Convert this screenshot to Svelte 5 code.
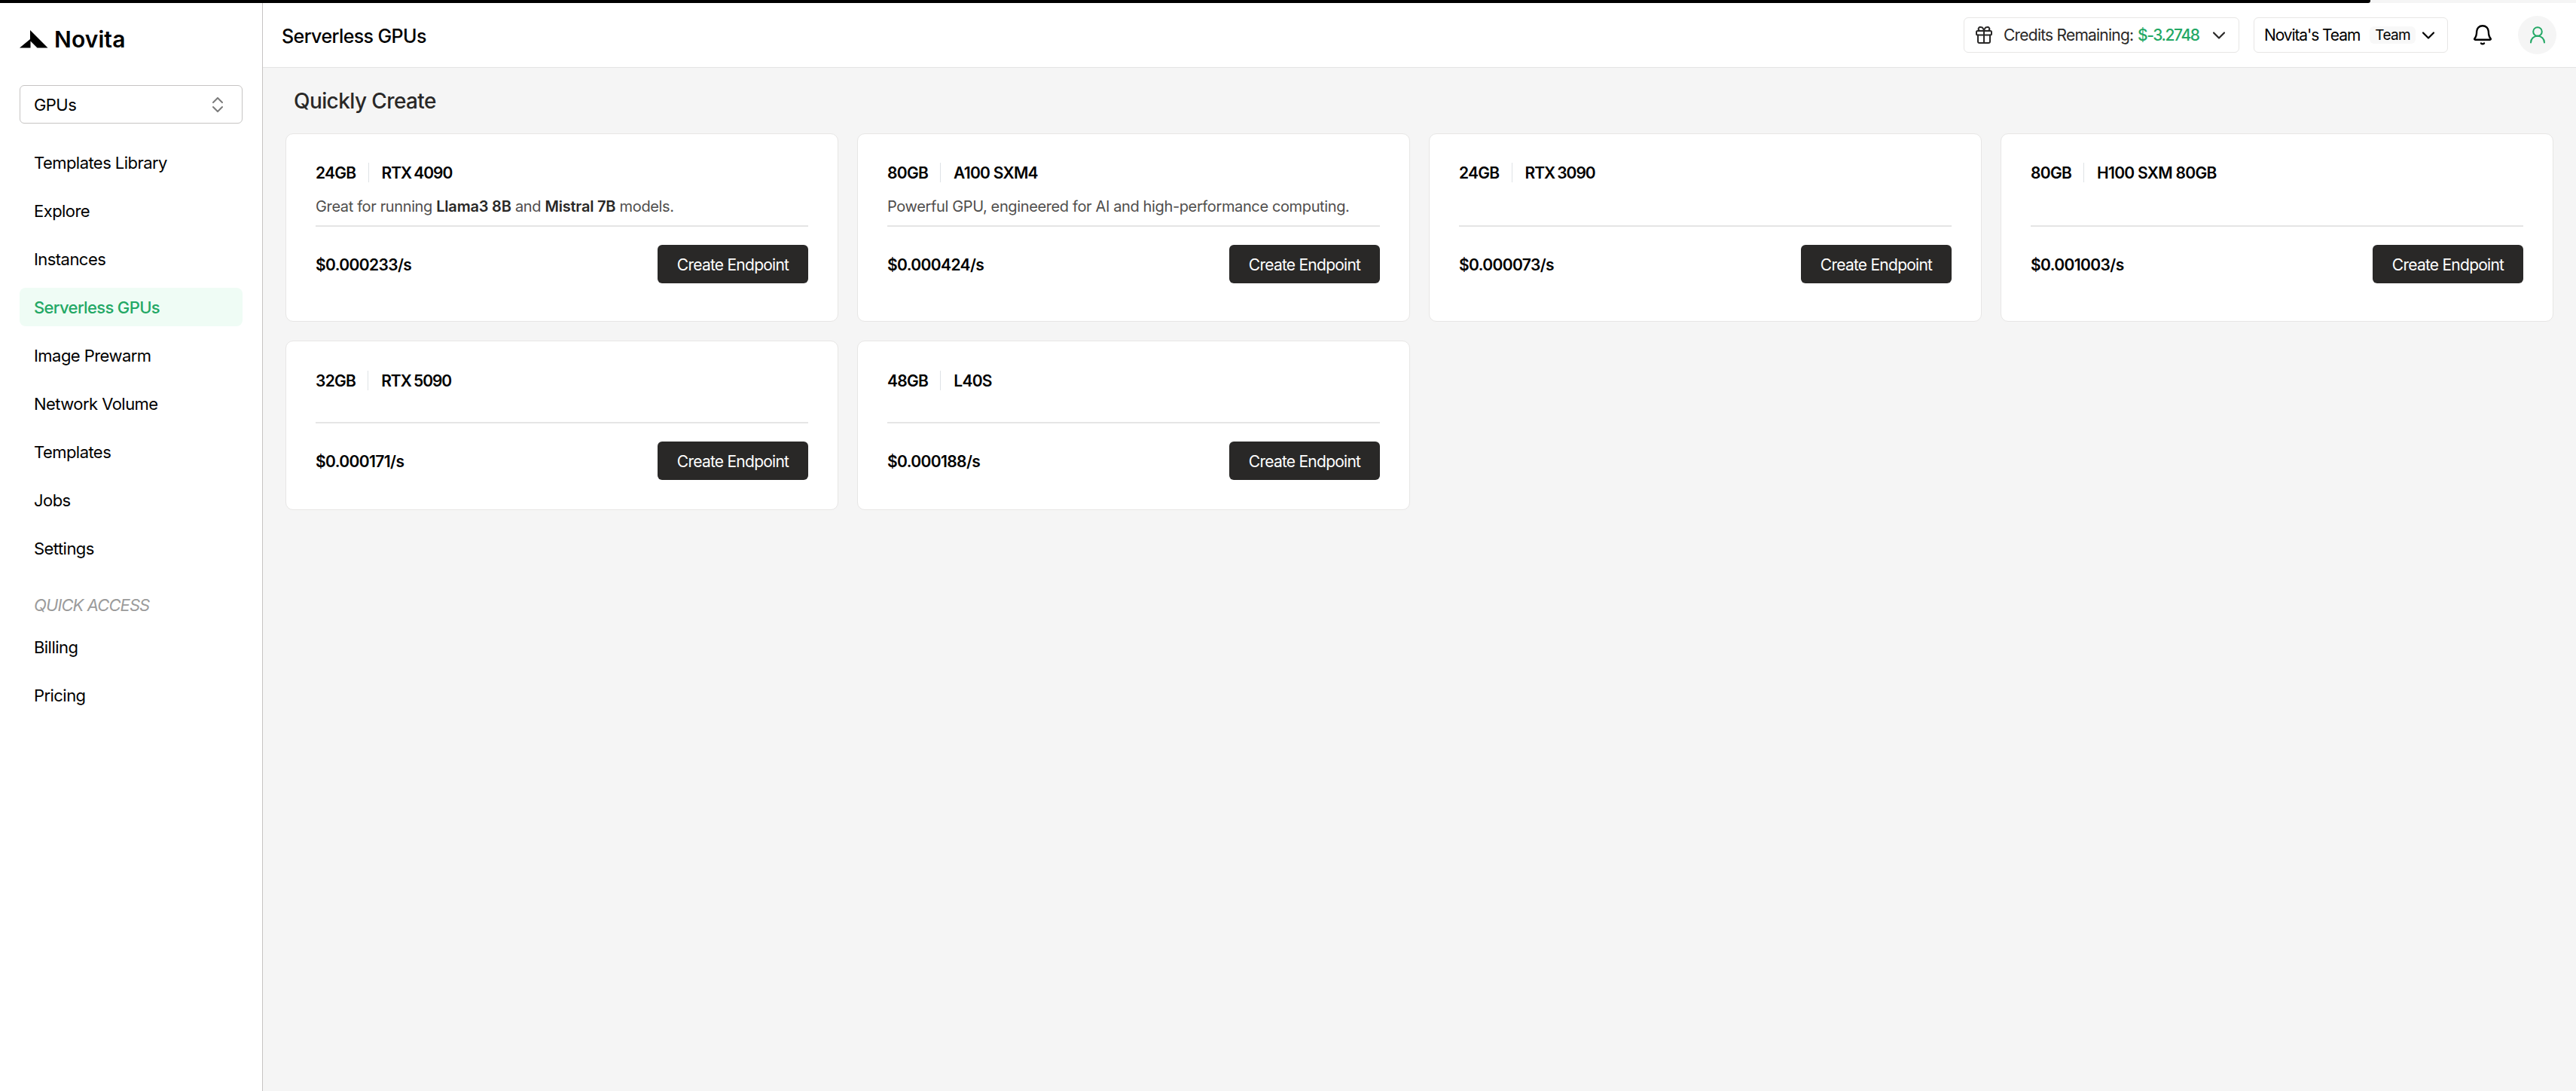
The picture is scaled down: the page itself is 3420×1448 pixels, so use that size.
<script lang="ts">
    type Gpu = {
        memory: string;
        name: string;
        price: string;
        desc?: { text: string; strong?: boolean }[];
    };

    const navItems = [
        "Templates Library",
        "Explore",
        "Instances",
        "Serverless GPUs",
        "Image Prewarm",
        "Network Volume",
        "Templates",
        "Jobs",
        "Settings",
    ];
    const quickItems = ["Billing", "Pricing"];
    let active = $state("Serverless GPUs");

    const rows: Gpu[][] = [
        [
            {
                memory: "24GB",
                name: "RTX 4090",
                price: "$0.000233/s",
                desc: [
                    { text: "Great for running " },
                    { text: "Llama3 8B", strong: true },
                    { text: " and " },
                    { text: "Mistral 7B", strong: true },
                    { text: " models." },
                ],
            },
            {
                memory: "80GB",
                name: "A100 SXM4",
                price: "$0.000424/s",
                desc: [{ text: "Powerful GPU, engineered for AI and high-performance computing." }],
            },
            { memory: "24GB", name: "RTX 3090", price: "$0.000073/s" },
            { memory: "80GB", name: "H100 SXM 80GB", price: "$0.001003/s" },
        ],
        [
            { memory: "32GB", name: "RTX 5090", price: "$0.000171/s" },
            { memory: "48GB", name: "L40S", price: "$0.000188/s" },
        ],
    ];
</script>

<div class="progress"><div class="progress-bar"></div></div>

<div class="layout">
    <aside class="sidebar">
        <div class="logo">
            <svg width="38" height="24" viewBox="0 0 38 24">
                <path d="M14 0v12L0 23.500h14.500v-9l9 9H37.500z" />
            </svg>
            <span>Novita</span>
        </div>

        <button class="select">
            <span>GPUs</span>
            <svg width="14" height="20" viewBox="0 0 14 20">
                <path d="M1 7l6-6 6 6M1 13l6 6 6-6" />
            </svg>
        </button>

        <nav>
            {#each navItems as item}
                <button class="nav-item" class:active={item === active} onclick={() => (active = item)}>
                    {item}
                </button>
            {/each}
            <p class="nav-title">QUICK ACCESS</p>
            {#each quickItems as item}
                <button class="nav-item" class:active={item === active} onclick={() => (active = item)}>
                    {item}
                </button>
            {/each}
        </nav>
    </aside>

    <main>
        <header>
            <h1>Serverless GPUs</h1>
            <div class="tools">
                <button class="credits">
                    <svg class="gift" width="22" height="23" viewBox="0 0 22 23">
                        <rect x="1" y="6" width="20" height="5.500" rx="1.500" />
                        <path d="M3 11.500v8.500a2 2 0 0 0 2 2h12a2 2 0 0 0 2-2v-8.500M11 6v16" />
                        <path d="M11 6C10.300 2.800 8.800 1 6.800 1a2.500 2.500 0 0 0-2 4.500M11 6c.7-3.200 2.200-5 4.200-5a2.500 2.500 0 0 1 2 4.500" />
                    </svg>
                    <span class="label">Credits Remaining:</span>
                    <span class="amount">$-3.2748</span>
                    <svg class="chevron" width="16" height="10" viewBox="0 0 16 10"><path d="M1 1.500l7 7 7-7" /></svg>
                </button>
                <button class="team">
                    <span class="team-name">Novita's Team</span>
                    <span class="tag">Team</span>
                    <svg class="chevron" width="16" height="10" viewBox="0 0 16 10"><path d="M1 1.500l7 7 7-7" /></svg>
                </button>
                <svg class="bell" width="24" height="27" viewBox="0 0 24 27">
                    <path d="M12 1.200c-4.500 0-7.600 3.200-7.800 7.300-.1 3.500-.4 6.300-2 8.500l-.8 1.200c-.5.800-.1 1.600.8 1.600h19.600c.9 0 1.300-.8.8-1.600l-.8-1.200c-1.600-2.200-1.900-5-2-8.500-.2-4.100-3.300-7.300-7.800-7.300z" />
                    <path d="M10 24.500c1 1.200 3 1.200 4 0" />
                </svg>
                <div class="avatar">
                    <svg width="20" height="23" viewBox="0 0 20 23">
                        <circle cx="10" cy="7" r="5.800" />
                        <path d="M1 21.500c0-5.200 4-8.700 9-8.700s9 3.500 9 8.700" />
                    </svg>
                </div>
            </div>
        </header>

        <section>
            <h2>Quickly Create</h2>
            {#each rows as row, i}
                <div class="cards" class:compact={i > 0}>
                    {#each row as gpu}
                        <article class="card">
                            <div class="card-head">
                                <span>{gpu.memory}</span>
                                <i></i>
                                <span class:rtx={gpu.name.startsWith("RTX")}>{gpu.name}</span>
                            </div>
                            <p class="desc">
                                {#each gpu.desc ?? [] as part}{#if part.strong}<b>{part.text}</b>{:else}{part.text}{/if}{/each}
                            </p>
                            <div class="card-foot">
                                <span class="price">{gpu.price}</span>
                                <button class="create">Create Endpoint</button>
                            </div>
                        </article>
                    {/each}
                </div>
            {/each}
        </section>
    </main>
</div>

<style>
    :global(body) {
        background: #fff;
        font-family: Inter, "Liberation Sans", sans-serif;
        font-size: 22px;
        color: #000;
    }
    button {
        font: inherit;
        color: inherit;
        letter-spacing: inherit;
        white-space: nowrap;
        background: none;
        border: 0;
        padding: 0;
        cursor: pointer;
    }
    svg {
        display: block;
        flex: none;
        fill: none;
        stroke: currentColor;
        stroke-width: 2;
        stroke-linecap: round;
        stroke-linejoin: round;
    }
    h1,
    h2,
    p {
        margin: 0;
    }
    .progress {
        height: 4px;
        background: #f5f5f5;
    }
    .progress-bar {
        width: 92.03%;
        height: 4px;
        background: #000;
        border-bottom-right-radius: 3px;
    }
    .layout {
        display: flex;
        height: 1444px;
    }
    .sidebar {
        box-sizing: border-box;
        width: 349px;
        padding: 35px 26px 0;
        border-right: 1px solid #c6c4c3;
        letter-spacing: -0.55px;
    }
    .logo {
        display: flex;
        align-items: center;
        gap: 8px;
        height: 26px;
    }
    .logo svg {
        fill: #000;
        stroke: none;
    }
    .logo span {
        font-size: 30px;
        font-weight: 600;
        letter-spacing: 0.1px;
    }
    .select {
        box-sizing: border-box;
        display: flex;
        align-items: center;
        justify-content: space-between;
        width: 296px;
        height: 51px;
        margin: 48px 0 26px;
        padding: 0 25px 0 18px;
        border: 1px solid #c6c4c3;
        border-radius: 6px;
    }
    .select svg {
        color: #7b7b7b;
    }
    .nav-item {
        display: block;
        width: 296px;
        height: 51px;
        margin-bottom: 13px;
        padding-left: 19px;
        border-radius: 8px;
        text-align: left;
    }
    .nav-item.active {
        background: #effcf5;
        color: #23a865;
        font-weight: 500;
        letter-spacing: -0.65px;
    }
    .nav-title {
        height: 40px;
        margin: 30px 0 10px;
        padding-left: 19px;
        line-height: 40px;
        font-style: italic;
        letter-spacing: -0.9px;
        color: #9b9b9b;
    }
    main {
        flex: 1;
        background: #f5f5f5;
    }
    header {
        box-sizing: border-box;
        display: flex;
        align-items: center;
        justify-content: space-between;
        height: 86px;
        padding: 0 26px 0 25px;
        background: #fff;
        border-bottom: 1px solid #e4e4e4;
    }
    h1 {
        padding-top: 2px;
        font-size: 25px;
        font-weight: 500;
        letter-spacing: -0.6px;
    }
    .tools {
        display: flex;
        align-items: center;
        font-size: 21px;
    }
    .credits,
    .team {
        box-sizing: border-box;
        display: flex;
        align-items: center;
        height: 47px;
        border: 1px solid #e7e6e5;
        border-radius: 6px;
    }
    .credits {
        width: 366px;
        margin-right: 19px;
        padding: 0 18px 0 15px;
        color: #292827;
    }
    .gift {
        margin-right: 15px;
    }
    .label {
        width: 172px;
        margin-right: 6px;
        letter-spacing: -0.78px;
    }
    .amount {
        color: #23a865;
        font-weight: 500;
        letter-spacing: -1.4px;
    }
    .chevron {
        margin-left: auto;
        stroke-width: 2.2;
    }
    .team {
        width: 258px;
        margin-right: 34px;
        padding: 0 17px 0 13px;
        letter-spacing: -0.6px;
    }
    .team-name {
        letter-spacing: -1.1px;
    }
    .tag {
        margin-left: 13px;
        padding: 0 7px;
        border-radius: 6px;
        background: #f8f8f8;
        font-size: 19px;
        line-height: 23px;
    }
    .bell {
        margin-right: 35px;
        stroke-width: 2.4;
    }
    .avatar {
        display: grid;
        place-items: center;
        width: 51px;
        height: 51px;
        border-radius: 50%;
        background: #f5f5f5;
        color: #23a865;
    }
    section {
        padding: 20px 30px 0;
    }
    h2 {
        height: 67px;
        padding-left: 11px;
        line-height: 49px;
        font-size: 28px;
        font-weight: 500;
        letter-spacing: -0.6px;
        color: #292827;
    }
    .cards {
        display: grid;
        grid-template-columns: repeat(4, 734px);
        gap: 25px;
        margin-bottom: 25px;
    }
    .card {
        box-sizing: border-box;
        height: 250px;
        padding: 38px 39px 0;
        background: #fff;
        border: 1px solid #e7e6e5;
        border-radius: 10px;
    }
    .card-head {
        display: flex;
        align-items: center;
        height: 26px;
        font-size: 21px;
        font-weight: 600;
        letter-spacing: -0.7px;
    }
    .card-head i {
        width: 1px;
        height: 26px;
        margin: 0 17px 0 16px;
        background: #dfe3e6;
    }
    .card-head .rtx {
        letter-spacing: -1.05px;
        word-spacing: -1px;
    }
    .desc {
        box-sizing: border-box;
        height: 59px;
        padding-top: 16px;
        border-bottom: 2px solid #e5e5e5;
        line-height: 32px;
        font-size: 20px;
        letter-spacing: -0.37px;
        color: #4f4e4d;
    }
    .desc b {
        font-weight: 600;
        letter-spacing: -0.2px;
        color: #292827;
    }
    .compact .card {
        height: 225px;
        padding-top: 39px;
    }
    .compact .desc {
        height: 44px;
    }
    .card-foot {
        display: flex;
        align-items: center;
        justify-content: space-between;
        margin-top: 24px;
    }
    .price {
        padding-top: 1px;
        font-size: 21px;
        font-weight: 600;
        letter-spacing: -0.6px;
    }
    .create {
        width: 200px;
        height: 51px;
        padding-top: 1px;
        border-radius: 6px;
        background: #292827;
        color: #fff;
        font-size: 21px;
        letter-spacing: -0.75px;
    }
</style>
